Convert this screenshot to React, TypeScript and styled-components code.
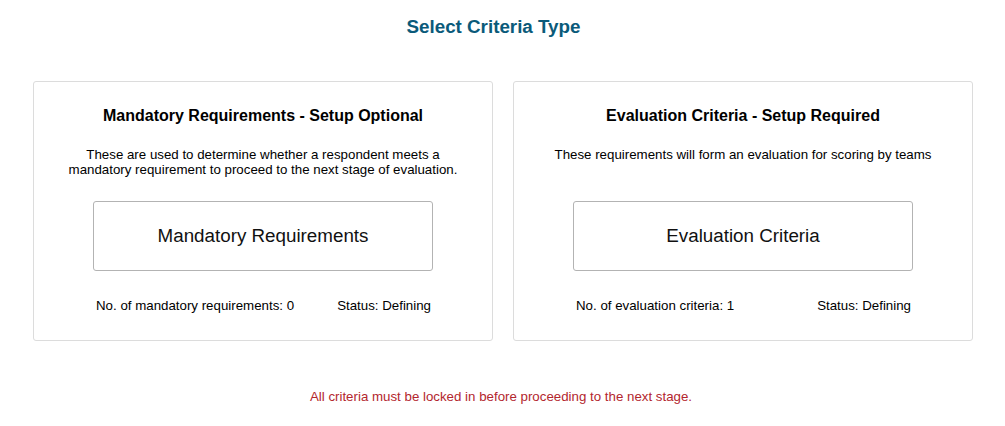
import React from "react";
import styled, { createGlobalStyle } from "styled-components";

const GlobalStyle = createGlobalStyle`
  html, body { margin: 0; padding: 0; background: #ffffff; }
  body { font-family: "Liberation Sans", Arial, sans-serif; color: #000; }
  * { box-sizing: border-box; }
`;

const Page = styled.div`
  width: 1005px;
  padding: 16px 32px 0 33px;
  display: flex;
  flex-direction: column;
  align-items: center;
`;

const Heading = styled.h1`
  margin: 0 19px 0 0;
  font-size: 18.8px;
  line-height: 22px;
  font-weight: bold;
  color: #0a5a7a;
`;

const Cards = styled.div`
  margin-top: 43px;
  width: 100%;
  display: grid;
  grid-template-columns: 460px 460px;
  column-gap: 20px;
`;

const Card = styled.section`
  height: 260px;
  border: 1px solid #dcdcdc;
  border-radius: 3px;
  padding-top: 24px;
  display: flex;
  flex-direction: column;
  align-items: center;
`;

const CardTitle = styled.h2`
  margin: 0;
  font-size: 16px;
  line-height: 19px;
  font-weight: bold;
`;

const Description = styled.p`
  margin: 18px 0 0 0;
  height: 58px;
  padding-top: 4px;
  font-size: 13.3px;
  line-height: 15px;
  text-align: center;
`;

const SelectButton = styled.button`
  width: 340px;
  height: 70px;
  background: #ffffff;
  border: 1px solid #b3b3b3;
  border-radius: 3px;
  font-family: "Liberation Sans", Arial, sans-serif;
  font-size: 18.8px;
  color: #111;
  cursor: pointer;
`;

const Stats = styled.div`
  margin-top: 27px;
  width: 340px;
  padding: 0 2px 0 3px;
  display: flex;
  justify-content: space-between;
  font-size: 13.3px;
  line-height: 15px;
`;

const Notice = styled.p`
  margin: 48px 4px 0 0;
  font-size: 13.3px;
  line-height: 15px;
  color: #b3262e;
`;

const cards = [
  {
    title: "Mandatory Requirements - Setup Optional",
    desc: ["These are used to determine whether a respondent meets a", "mandatory requirement to proceed to the next stage of evaluation."],
    button: "Mandatory Requirements",
    count: "No. of mandatory requirements: 0",
    status: "Status: Defining",
  },
  {
    title: "Evaluation Criteria - Setup Required",
    desc: ["These requirements will form an evaluation for scoring by teams"],
    button: "Evaluation Criteria",
    count: "No. of evaluation criteria: 1",
    status: "Status: Defining",
  },
];

export default function App() {
  return (
    <>
      <GlobalStyle />
      <Page>
        <Heading>Select Criteria Type</Heading>
        <Cards>
          {cards.map((c) => (
            <Card key={c.title}>
              <CardTitle>{c.title}</CardTitle>
              <Description>
                {c.desc.map((l, i) => (
                  <React.Fragment key={i}>
                    {l}
                    {i < c.desc.length - 1 && <br />}
                  </React.Fragment>
                ))}
              </Description>
              <SelectButton>{c.button}</SelectButton>
              <Stats>
                <span>{c.count}</span>
                <span>{c.status}</span>
              </Stats>
            </Card>
          ))}
        </Cards>
        <Notice>All criteria must be locked in before proceeding to the next stage.</Notice>
      </Page>
    </>
  );
}
